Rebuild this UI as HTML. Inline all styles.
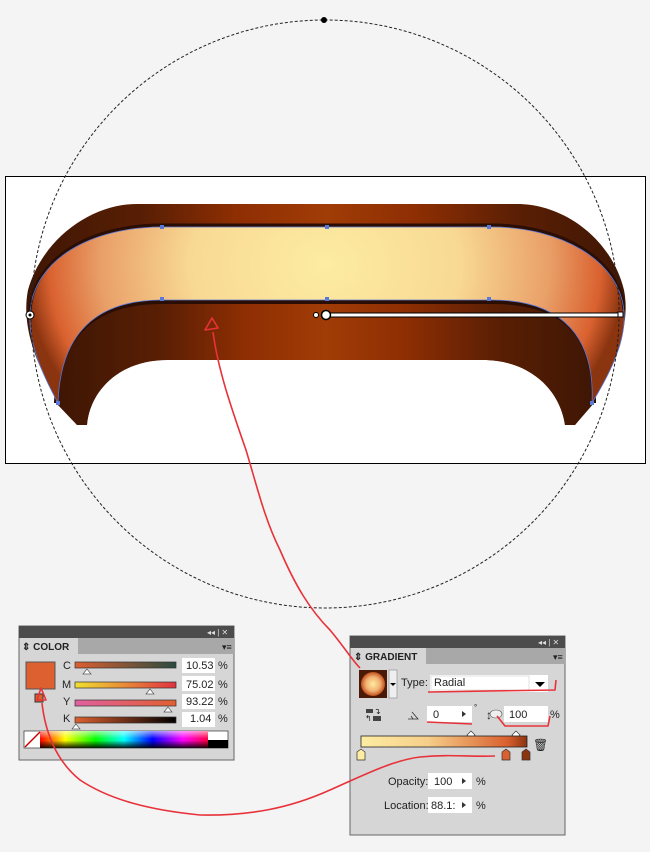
<!DOCTYPE html>
<html><head><meta charset="utf-8"><style>
html,body{margin:0;padding:0;background:#f4f4f4}
svg{display:block}
text{font-family:"Liberation Sans",sans-serif;font-size:11px;fill:#222}
</style></head><body>
<svg width="650" height="852" viewBox="0 0 650 852" xmlns="http://www.w3.org/2000/svg">
<defs>
<linearGradient id="dk" x1="0" y1="0" x2="1" y2="0">
<stop offset="0" stop-color="#3e1604"/><stop offset="0.2" stop-color="#5a1f04"/><stop offset="0.35" stop-color="#8e2e03"/><stop offset="0.5" stop-color="#a03c06"/><stop offset="0.65" stop-color="#8e2e03"/><stop offset="0.82" stop-color="#5a1f04"/><stop offset="1" stop-color="#3e1604"/>
</linearGradient>
<radialGradient id="lt" gradientUnits="userSpaceOnUse" cx="325" cy="265" r="300" gradientTransform="translate(325 265) scale(1 0.8) translate(-325 -265)">
<stop offset="0" stop-color="#fdeca2"/><stop offset="0.45" stop-color="#f8d993"/><stop offset="0.75" stop-color="#e99f68"/><stop offset="0.92" stop-color="#d9612f"/><stop offset="1" stop-color="#8a3410"/>
</radialGradient>
<linearGradient id="spec" x1="0" y1="0" x2="1" y2="0">
<stop offset="0" stop-color="#ff0000"/><stop offset="0.15" stop-color="#ffff00"/><stop offset="0.33" stop-color="#00ff00"/><stop offset="0.5" stop-color="#00ffff"/><stop offset="0.67" stop-color="#0000ff"/><stop offset="0.85" stop-color="#ff00ff"/><stop offset="1" stop-color="#ff0040"/>
</linearGradient>
<linearGradient id="specv" x1="0" y1="0" x2="0" y2="1">
<stop offset="0" stop-color="#fff" stop-opacity="0.6"/><stop offset="0.45" stop-color="#fff" stop-opacity="0"/><stop offset="0.55" stop-color="#000" stop-opacity="0"/><stop offset="1" stop-color="#000" stop-opacity="0.9"/>
</linearGradient>
<linearGradient id="gbar" x1="0" y1="0" x2="1" y2="0">
<stop offset="0" stop-color="#fdeca2"/><stop offset="0.4" stop-color="#f6cf8a"/><stop offset="0.88" stop-color="#d9612f"/><stop offset="1" stop-color="#8a3410"/>
</linearGradient>
<radialGradient id="prev"><stop offset="0" stop-color="#fdeca2"/><stop offset="0.6" stop-color="#f1b070"/><stop offset="1" stop-color="#c0501e"/></radialGradient>
</defs>

<!-- canvas -->
<rect x="5.5" y="176.5" width="640" height="287" fill="#fff" stroke="#000"/>

<!-- back dark shape -->
<path d="M77,425 C40,380 20,330 28,290 C42,240 90,204 137,204 L517,204 C565,204 612,240 624,290 C632,330 610,380 575,425 L565,425 C560,390 530,360 483,360 L167,360 C120,360 90,390 87,425 Z" fill="url(#dk)"/>
<!-- lower dark band -->
<path d="M56,403 C58,330 100,302 162,302 L492,302 C560,302 595,330 594,403 L575,425 L565,425 C560,390 530,360 483,360 L167,360 C120,360 90,390 87,425 L77,425 Z" fill="url(#dk)"/>
<path d="M56,403 C58,330 100,302 162,302 L492,302 C560,302 595,330 594,403" fill="none" stroke="#2a0d03" stroke-width="4"/>
<!-- light band -->
<path d="M58,403 C40,370 28,340 30,312 C34,260 90,227 162,227 L492,227 C560,227 620,260 624,312 C626,340 612,370 592,403 C595,340 565,300 492,300 L162,300 C90,300 60,340 58,403 Z" fill="url(#lt)"/>
<path d="M30,312 C34,260 90,227 162,227 L492,227 C560,227 620,260 624,312" fill="none" stroke="#2a0d03" stroke-width="3" transform="translate(0,-2)"/>
<!-- selection lines -->
<g fill="none" stroke="#5a78d8" stroke-width="0.8">
<path d="M58,403 C40,370 28,340 30,312 C34,260 90,227 162,227 L492,227 C560,227 620,260 624,312 C626,340 612,370 592,403"/>
<path d="M58,403 C60,340 90,300 162,300 L492,300 C565,300 595,340 592,403"/>
</g>
<g fill="#5a78d8">
<rect x="160" y="225" width="4" height="4"/><rect x="325" y="225" width="4" height="4"/><rect x="487" y="225" width="4" height="4"/>
<rect x="160" y="297" width="4" height="4"/><rect x="325" y="297" width="4" height="4"/><rect x="487" y="297" width="4" height="4"/>
<rect x="56" y="401" width="4" height="4"/><rect x="590" y="401" width="4" height="4"/>
</g>

<!-- dashed circle -->
<circle cx="325" cy="314" r="294" fill="none" stroke="#222" stroke-width="1" stroke-dasharray="3,2"/>
<circle cx="324" cy="20" r="3" fill="#000"/>
<circle cx="30" cy="315" r="4" fill="#fff" stroke="#000"/><circle cx="30" cy="315" r="1.5" fill="#000"/>

<!-- gradient handle -->
<rect x="325" y="313" width="296" height="4" fill="#fff" stroke="#000" stroke-width="1"/>
<rect x="618" y="312" width="5" height="5" fill="#fff" stroke="#000"/>
<circle cx="316" cy="315" r="2.5" fill="#fff" stroke="#000"/>
<circle cx="326" cy="315" r="4.5" fill="#fff" stroke="#000" stroke-width="1.5"/>

<!-- COLOR panel -->
<rect x="19" y="626" width="215" height="134" fill="#d6d6d6" stroke="#666"/>
<rect x="19" y="626" width="215" height="12" fill="#4c4c4c"/>
<text x="207" y="635" style="font-size:8px;fill:#ddd">◂◂ | ✕</text>
<rect x="78" y="638" width="156" height="16" fill="#a8a8a8"/>
<text x="22" y="650" style="font-size:10px;font-weight:bold">⇕ COLOR</text>
<text x="222" y="650" style="font-size:9px">▾≡</text>
<rect x="26" y="662" width="29" height="27" fill="#dc6030" stroke="#555"/>
<rect x="35" y="694" width="8" height="8" fill="#dc6030" stroke="#333"/>
<g style="font-size:10px">
<text x="63" y="669">C</text><text x="62" y="688">M</text><text x="63" y="705">Y</text><text x="63" y="722">K</text>
</g>
<defs>
<linearGradient id="c1"><stop offset="0" stop-color="#dc6030"/><stop offset="1" stop-color="#2a4a40"/></linearGradient>
<linearGradient id="c2"><stop offset="0" stop-color="#f0e030"/><stop offset="1" stop-color="#e03040"/></linearGradient>
<linearGradient id="c3"><stop offset="0" stop-color="#e060a0"/><stop offset="1" stop-color="#e06030"/></linearGradient>
<linearGradient id="c4"><stop offset="0" stop-color="#dc6030"/><stop offset="1" stop-color="#000"/></linearGradient>
</defs>
<rect x="75" y="662" width="101" height="6" fill="url(#c1)" stroke="#333" stroke-width="0.7"/>
<rect x="75" y="682" width="101" height="6" fill="url(#c2)" stroke="#333" stroke-width="0.7"/>
<rect x="75" y="700" width="101" height="6" fill="url(#c3)" stroke="#333" stroke-width="0.7"/>
<rect x="75" y="717" width="101" height="6" fill="url(#c4)" stroke="#333" stroke-width="0.7"/>
<g fill="#fff" stroke="#555" stroke-width="0.7">
<path d="M87,669 l-4,5 h8z"/><path d="M150,689 l-4,5 h8z"/><path d="M168,707 l-4,5 h8z"/><path d="M76,724 l-4,5 h8z"/>
</g>
<g fill="#fff"><rect x="182" y="658" width="33" height="15"/><rect x="182" y="676" width="33" height="15"/><rect x="182" y="694" width="33" height="15"/><rect x="182" y="712" width="33" height="15"/></g>
<g style="font-size:10px">
<text x="186" y="669">10.53</text><text x="186" y="688">75.02</text><text x="186" y="705">93.22</text><text x="190" y="722">1.04</text>
<text x="218" y="669">%</text><text x="218" y="688">%</text><text x="218" y="705">%</text><text x="218" y="722">%</text>
</g>
<rect x="24" y="731" width="204" height="17" fill="#fff" stroke="#333" stroke-width="0.7"/>
<rect x="40" y="731" width="168" height="17" fill="url(#spec)"/>
<rect x="40" y="731" width="168" height="17" fill="url(#specv)"/>
<rect x="208" y="740" width="20" height="8" fill="#000"/>
<path d="M25,747 L40,732" stroke="#c00" stroke-width="1.5"/>

<!-- GRADIENT panel -->
<rect x="350" y="636" width="215" height="199" fill="#d6d6d6" stroke="#666"/>
<rect x="350" y="636" width="215" height="12" fill="#4c4c4c"/>
<text x="538" y="645" style="font-size:8px;fill:#ddd">◂◂ | ✕</text>
<rect x="426" y="648" width="139" height="16" fill="#a8a8a8"/>
<text x="354" y="660" style="font-size:10px;font-weight:bold">⇕ GRADIENT</text>
<text x="553" y="660" style="font-size:9px">▾≡</text>
<rect x="359" y="670" width="28" height="28" fill="#4a1a06"/>
<circle cx="373" cy="684" r="12" fill="url(#prev)"/>
<rect x="389" y="670" width="8" height="28" fill="#eee" stroke="#888" stroke-width="0.6"/>
<path d="M390,683 h6 l-3,3z" fill="#000"/>
<text x="401" y="686">Type:</text>
<rect x="430" y="675" width="118" height="17" fill="#fff"/>
<rect x="431" y="676" width="98" height="14" fill="none" stroke="#ccc" stroke-width="0.6"/>
<text x="434" y="686">Radial</text>
<path d="M535,682 h10 l-5,5z" fill="#000"/>
<g fill="#444"><rect x="366" y="709" width="7" height="4"/><rect x="373" y="716" width="8" height="5"/></g>
<text x="374" y="714" style="font-size:8px">↴</text><text x="365" y="721" style="font-size:8px">↰</text>
<path d="M408,719 h10 l-6,-7 M411,716 l2,3" fill="none" stroke="#333" stroke-width="0.8"/>
<rect x="427" y="706" width="45" height="16" fill="#fff"/>
<text x="433" y="718">0</text>
<path d="M462,711 l4,3 l-4,3z" fill="#333"/>
<text x="474" y="710" style="font-size:8px">°</text>
<text x="486" y="719" style="font-size:12px">↕</text>
<ellipse cx="496" cy="714" rx="6" ry="4" fill="#eee" stroke="#555" stroke-width="0.6"/>
<rect x="504" y="706" width="44" height="16" fill="#fff"/>
<text x="509" y="718">100</text>
<text x="550" y="718">%</text>
<path d="M467,735 l4,-4 l4,4 l-4,4z M512,735 l4,-4 l4,4 l-4,4z" fill="#fff" stroke="#333" stroke-width="0.7"/>
<path d="M463,740 h14 M511,740 h10" stroke="#2ad32a" stroke-width="2"/>
<rect x="361" y="736" width="166" height="11" fill="url(#gbar)" stroke="#222" stroke-width="0.8"/>
<text x="533" y="749" style="font-size:12px">🗑</text>
<g stroke="#333" stroke-width="0.7">
<path d="M357,752 l4,-3 l4,3 v8 h-8z" fill="#fdeca2"/>
<path d="M502,752 l4,-3 l4,3 v8 h-8z" fill="#d9612f"/>
<path d="M522,752 l4,-3 l4,3 v8 h-8z" fill="#8a3410"/>
</g>
<text x="388" y="785">Opacity:</text>
<rect x="428" y="773" width="44" height="16" fill="#fff"/>
<text x="434" y="785">100</text><path d="M462,778 l4,3 l-4,3z" fill="#333"/>
<text x="476" y="785">%</text>
<text x="384" y="809">Location:</text>
<rect x="428" y="797" width="44" height="16" fill="#fff"/>
<text x="431" y="809">88.1:</text><path d="M462,802 l4,3 l-4,3z" fill="#333"/>
<text x="476" y="809">%</text>

<!-- red annotations -->
<g fill="none" stroke="#e8323a" stroke-width="1.6" stroke-linejoin="round">
<path d="M205,330 L212,318 L218,328 Z"/>
<path d="M213,332 C218,370 232,410 246,450 C258,490 265,520 280,550 C295,585 310,610 330,630 C345,648 352,660 360,668"/>
<path d="M428,692 L555,690 L556,680"/>
<path d="M427,722 L472,724"/>
<path d="M497,716 L505,726 L548,726 L550,716"/>
<path d="M37,700 L41,688 L46,700 Z"/>
<path d="M42,703 C45,730 55,760 80,780 C110,800 150,810 200,815 C250,816 290,808 330,790 C370,772 395,760 420,757 C450,754 470,757 495,756"/>
</g>
</svg>
</body></html>
